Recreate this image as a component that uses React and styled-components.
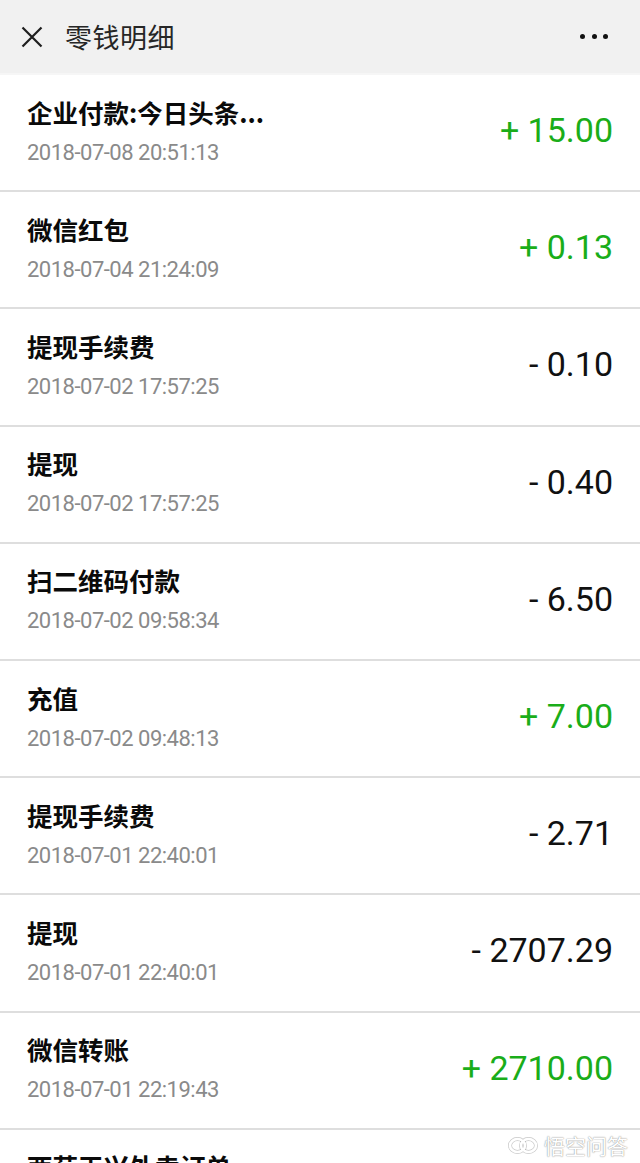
import React from 'react';
import styled, { createGlobalStyle } from 'styled-components';

const GlobalStyle = createGlobalStyle`
  html, body {
    margin: 0;
    padding: 0;
    background: #fff;
  }
  body {
    font-family: Roboto, "Noto Sans CJK SC", sans-serif;
    -webkit-font-smoothing: antialiased;
  }
`;

const records = [
    { title: '企业付款:今日头条...', time: '2018-07-08 20:51:13', amount: '+ 15.00', income: true },
    { title: '微信红包', time: '2018-07-04 21:24:09', amount: '+ 0.13', income: true },
    { title: '提现手续费', time: '2018-07-02 17:57:25', amount: '- 0.10' },
    { title: '提现', time: '2018-07-02 17:57:25', amount: '- 0.40' },
    { title: '扫二维码付款', time: '2018-07-02 09:58:34', amount: '- 6.50' },
    { title: '充值', time: '2018-07-02 09:48:13', amount: '+ 7.00', income: true },
    { title: '提现手续费', time: '2018-07-01 22:40:01', amount: '- 2.71' },
    { title: '提现', time: '2018-07-01 22:40:01', amount: '- 2707.29' },
    { title: '微信转账', time: '2018-07-01 22:19:43', amount: '+ 2710.00', income: true },
    { title: '西荷王兴外卖订单', time: '2018-07-01 12:05:37', amount: '- 23.00' },
];

const App = () => {
    return (
        <Page>
            <GlobalStyle />
            <Header>
                <CloseButton>
                    <svg width="22" height="22" viewBox="0 0 22 22">
                        <path d="M1.5 1.5 L20.5 20.5 M20.5 1.5 L1.5 20.5" stroke="#1e1e1e" strokeWidth="2.2" fill="none" />
                    </svg>
                </CloseButton>
                <HeaderTitle>零钱明细</HeaderTitle>
                <MoreButton>
                    <Dot />
                    <Dot />
                    <Dot />
                </MoreButton>
            </Header>

            <List>
                {records.map((r, i) => (
                    <Row key={i}>
                        <Info>
                            <Title>{r.title}</Title>
                            <Time>{r.time}</Time>
                        </Info>
                        <Amount income={r.income ? 1 : 0}>{r.amount}</Amount>
                    </Row>
                ))}
            </List>

            {/* watermark of the source site, lies over the last row */}
            <Watermark>
                <svg width="30" height="17" viewBox="0 0 30 17">
                    <ellipse cx="9.5" cy="8.5" rx="7.5" ry="6.5" fill="none" stroke="rgba(0,0,0,0.22)" strokeWidth="4" />
                    <ellipse cx="20.5" cy="8.5" rx="7.5" ry="6.5" fill="none" stroke="rgba(0,0,0,0.22)" strokeWidth="4" />
                    <ellipse cx="9.5" cy="8.5" rx="7.5" ry="6.5" fill="none" stroke="#fff" strokeWidth="2.6" />
                    <ellipse cx="20.5" cy="8.5" rx="7.5" ry="6.5" fill="none" stroke="#fff" strokeWidth="2.6" />
                </svg>
                <span>悟空问答</span>
            </Watermark>
        </Page>
    );
};

export default App;

const Page = styled.div`
position: relative;
width: 640px;
height: 1163px;
overflow: hidden;
background: #fff;
`;

const Header = styled.div`
height: 73px;
display: flex;
align-items: center;
background: #f1f1f1;
border-bottom: 2px solid #f6f6f6;
padding: 0 32px 0 21px;
`;

const CloseButton = styled.div`
width: 22px;
height: 22px;
display: flex;
margin-top: 1px;
`;

const HeaderTitle = styled.div`
flex: 1;
margin-left: 22px;
font-family: "Noto Sans CJK SC", sans-serif;
font-size: 27px;
line-height: 36px;
color: #262626;
letter-spacing: 0.5px;
`;

const MoreButton = styled.div`
display: flex;
gap: 6.5px;
margin-bottom: 1px;
`;

const Dot = styled.span`
width: 5px;
height: 5px;
border-radius: 50%;
background: #111;
`;

const List = styled.div`
display: flex;
flex-direction: column;
`;

const Row = styled.div`
height: 117.2px;
flex-shrink: 0;
box-sizing: border-box;
display: flex;
align-items: center;
justify-content: space-between;
padding: 0 27px;
border-bottom: 2px solid #dedede;
`;

const Info = styled.div`
display: flex;
flex-direction: column;
`;

const Title = styled.div`
font-family: "Noto Sans CJK SC", sans-serif;
font-weight: 700;
font-size: 25.5px;
line-height: 40px;
color: #0a0a0a;
`;

const Time = styled.div`
font-family: Roboto, sans-serif;
font-size: 22px;
line-height: 42px;
letter-spacing: -0.5px;
color: #8a8a8a;
`;

const Amount = styled.div`
font-family: Roboto, sans-serif;
font-size: 34px;
line-height: 40px;
margin-bottom: 5px;
color: ${p => (p.income ? '#1aad19' : '#111')};
`;

const Watermark = styled.div`
position: absolute;
top: 1133px;
right: 12px;
display: flex;
align-items: center;
gap: 6px;
font-family: "Noto Sans CJK SC", sans-serif;
font-size: 21px;
line-height: 24px;
color: #fff;
text-shadow: 0 0 1px rgba(0, 0, 0, 0.45), 0 0 2px rgba(0, 0, 0, 0.2);
`;
